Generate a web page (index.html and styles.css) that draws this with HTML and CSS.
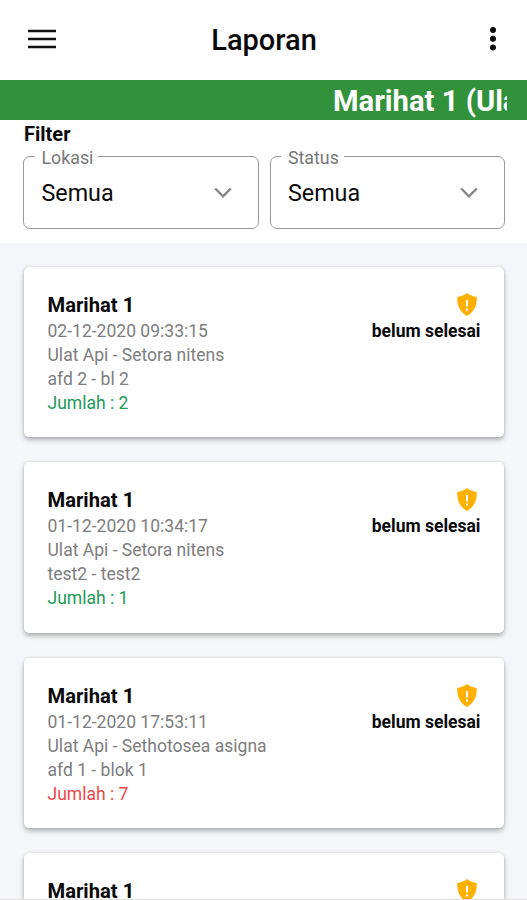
FILE: index.html
```html
<!DOCTYPE html>
<html lang="id">
  <head>
    <meta charset="UTF-8" />
    <meta name="viewport" content="width=device-width, initial-scale=1.0" />
    <title>Laporan</title>
    <link rel="stylesheet" href="styles.css">
  </head>
  <body>
    <header class="header">
      <svg class="menu" viewBox="0 0 28 20">
        <path d="M0 2h28M0 10h28M0 18h28" />
      </svg>
      <h1 class="title">Laporan</h1>
      <svg class="more" viewBox="0 0 8 26">
        <circle cx="4" cy="4" r="3" />
        <circle cx="4" cy="12.8" r="3" />
        <circle cx="4" cy="21.6" r="3" />
      </svg>
    </header>
    <div class="marquee">
      <div class="marquee-text">Marihat 1 (Ulat Api)</div>
    </div>
    <section class="filter">
      <h2 class="filter-title">Filter</h2>
      <div class="filter-row">
        <fieldset class="select">
          <legend>Lokasi</legend>
          <span>Semua</span>
          <svg class="arrow" viewBox="0 0 18 12"><path d="M1.2 1.5L9 9.3L16.8 1.5" /></svg>
        </fieldset>
        <fieldset class="select">
          <legend>Status</legend>
          <span>Semua</span>
          <svg class="arrow" viewBox="0 0 18 12"><path d="M1.2 1.5L9 9.3L16.8 1.5" /></svg>
        </fieldset>
      </div>
    </section>
    <main class="list">
      <div class="card">
        <div class="info">
          <h3 class="name">Marihat 1</h3>
          <p>02-12-2020 09:33:15</p>
          <p>Ulat Api - Setora nitens</p>
          <p>afd 2 - bl 2</p>
          <p class="green">Jumlah : 2</p>
        </div>
        <div class="status">
          <svg class="shield" viewBox="0 0 20 23">
            <path class="shield-bg" d="M10 0C7.5 2 3.8 3.4 0.2 4C0 12 2.2 18.5 10 23C17.8 18.5 20 12 19.8 4C16.2 3.4 12.5 2 10 0Z" />
            <path class="mark" d="M10 7v6.5M10 15.4v2.2" />
          </svg>
          <span>belum selesai</span>
        </div>
      </div>
      <div class="card">
        <div class="info">
          <h3 class="name">Marihat 1</h3>
          <p>01-12-2020 10:34:17</p>
          <p>Ulat Api - Setora nitens</p>
          <p>test2 - test2</p>
          <p class="green">Jumlah : 1</p>
        </div>
        <div class="status">
          <svg class="shield" viewBox="0 0 20 23">
            <path class="shield-bg" d="M10 0C7.5 2 3.8 3.4 0.2 4C0 12 2.2 18.5 10 23C17.8 18.5 20 12 19.8 4C16.2 3.4 12.5 2 10 0Z" />
            <path class="mark" d="M10 7v6.5M10 15.4v2.2" />
          </svg>
          <span>belum selesai</span>
        </div>
      </div>
      <div class="card">
        <div class="info">
          <h3 class="name">Marihat 1</h3>
          <p>01-12-2020 17:53:11</p>
          <p>Ulat Api - Sethotosea asigna</p>
          <p>afd 1 - blok 1</p>
          <p class="red">Jumlah : 7</p>
        </div>
        <div class="status">
          <svg class="shield" viewBox="0 0 20 23">
            <path class="shield-bg" d="M10 0C7.5 2 3.8 3.4 0.2 4C0 12 2.2 18.5 10 23C17.8 18.5 20 12 19.8 4C16.2 3.4 12.5 2 10 0Z" />
            <path class="mark" d="M10 7v6.5M10 15.4v2.2" />
          </svg>
          <span>belum selesai</span>
        </div>
      </div>
      <div class="card">
        <div class="info">
          <h3 class="name">Marihat 1</h3>
        </div>
        <div class="status">
          <svg class="shield" viewBox="0 0 20 23">
            <path class="shield-bg" d="M10 0C7.5 2 3.8 3.4 0.2 4C0 12 2.2 18.5 10 23C17.8 18.5 20 12 19.8 4C16.2 3.4 12.5 2 10 0Z" />
            <path class="mark" d="M10 7v6.5M10 15.4v2.2" />
          </svg>
        </div>
      </div>
    </main>
  </body>
</html>
```

FILE: styles.css
```css
* {
  box-sizing: border-box;
  margin: 0;
  padding: 0;
}

body {
  height: 900px;
  overflow: hidden;
  display: flex;
  flex-direction: column;
  font-family: Roboto, "Liberation Sans", sans-serif;
  color: #0a0a0a;
  background-color: #f4f6fa;
}

svg {
  display: block;
  flex: none;
}

.header {
  height: 80px;
  flex: none;
  display: grid;
  grid-template-columns: 28px 1fr 28px;
  align-items: center;
  padding: 0 30px 2px 28px;
  background-color: #fff;
}

.menu {
  width: 28px;
  height: 20px;
  stroke: #111;
  stroke-width: 2.6;
}

.title {
  padding: 2px 0 0 3px;
  font-size: 29px;
  font-weight: 500;
  line-height: 34px;
  text-align: center;
}

.more {
  width: 8px;
  height: 26px;
  justify-self: end;
  fill: #0a0a0a;
}

.marquee {
  height: 40px;
  flex: none;
  padding: 0 20px;
  background-color: #32913b;
}

.marquee-text {
  padding-left: 313px;
  overflow: hidden;
  white-space: nowrap;
  font-size: 29.2px;
  font-weight: 700;
  line-height: 43px;
  height: 40px;
  color: #fff;
}

.filter {
  height: 123px;
  flex: none;
  padding: 3px 22px 0 23px;
  background-color: #fff;
}

.filter-title {
  padding-left: 1px;
  font-size: 20px;
  font-weight: 700;
  line-height: 22px;
}

.filter-row {
  display: flex;
  gap: 11px;
}

.select {
  flex: 1;
  min-width: 0;
  height: 84px;
  display: flex;
  justify-content: space-between;
  padding: 9px 26px 0 17.5px;
  border: 1px solid #999;
  border-radius: 7px;
}

.select legend {
  margin-left: -7px;
  padding: 3px 5px 0 7px;
  font-size: 17.8px;
  line-height: 19px;
  color: #777;
}

.select span {
  font-size: 23.3px;
  line-height: 34px;
}

.arrow {
  width: 18px;
  height: 12px;
  margin-top: 11px;
  fill: none;
  stroke: #858585;
  stroke-width: 2.4;
}

.list {
  flex: 1;
  min-height: 0;
  overflow: hidden;
  display: flex;
  flex-direction: column;
  gap: 25px;
  padding: 24px 23px 0 24px;
  border-bottom: 1px solid #ddd;
}

.card {
  height: 170.4px;
  flex: none;
  display: flex;
  justify-content: space-between;
  padding: 25px 23.5px;
  border-radius: 5px;
  background-color: #fff;
  box-shadow: 0 3px 5px rgba(0, 0, 0, 0.27), 0 0 3px rgba(0, 0, 0, 0.12);
}

.info {
  font-size: 17.55px;
  line-height: 24px;
  color: #7d7d7d;
}

.name {
  padding-bottom: 1px;
  font-size: 20.2px;
  font-weight: 700;
  line-height: 26px;
  color: #0a0a0a;
}

.info .green {
  color: #219a58;
}

.info .red {
  color: #f04848;
}

.status {
  display: flex;
  flex-direction: column;
  align-items: flex-end;
  font-size: 17.5px;
  font-weight: 700;
  line-height: 24px;
}

.shield {
  width: 20px;
  height: 23px;
  margin: 1px 3.5px 3px 0;
}

.shield-bg {
  fill: #ffb000;
}

.mark {
  stroke: #fff;
  stroke-width: 2;
}
```
